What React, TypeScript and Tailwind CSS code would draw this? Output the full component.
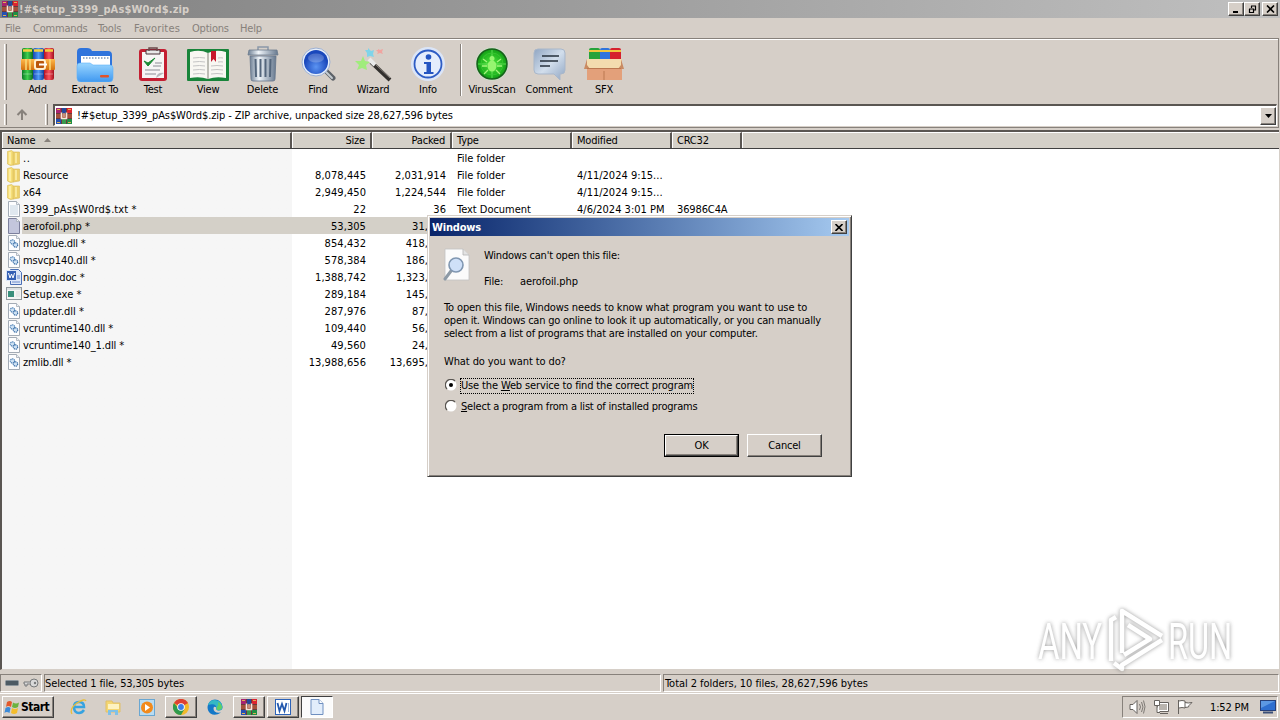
import React from "react";

const UI = "font-['DejaVu_Sans_Condensed','DejaVu_Sans',sans-serif]";
const RAISED =
  "border border-t-white border-l-white border-r-[#404040] border-b-[#404040] shadow-[inset_-1px_-1px_0_#87817b]";
const SUNKEN = "border border-t-[#87817b] border-l-[#87817b] border-r-white border-b-white";

const WinRarIcon = () => (
  <svg width="16" height="16" viewBox="0 0 16 16" className="shrink-0">
    <rect width="16" height="16" fill="#6a3a3c" />
    <rect x="0" y="0" width="5" height="5" fill="#a8246f" />
    <rect x="6" y="0" width="4" height="5" fill="#27479c" />
    <rect x="11" y="0" width="5" height="5" fill="#dc2430" />
    <rect x="0" y="11" width="5" height="5" fill="#2450b4" />
    <rect x="6" y="11" width="4" height="5" fill="#3a9a4e" />
    <rect x="11" y="11" width="5" height="5" fill="#1f8f45" />
    <rect x="0" y="6" width="16" height="4" fill="#a5503a" />
    <path d="M1 1.500h3M12 1.500h3M1 14.500h3M12 14.500h3" stroke="#e0b050" />
    <path d="M5.500 4.500v6h5v-6" stroke="#f3e6dc" strokeWidth="1.600" fill="none" />
    <path d="M8 5v4" stroke="#e9d2bc" />
  </svg>
);

const AddIcon = () => (
  <svg width="36" height="36" viewBox="0 0 36 36">
    <defs>
      <linearGradient id="bg"><stop stopColor="#0b7a25" /><stop offset=".5" stopColor="#3fd04f" /><stop offset="1" stopColor="#0c6b22" /></linearGradient>
      <linearGradient id="bb"><stop stopColor="#1846b0" /><stop offset=".5" stopColor="#4d9bf5" /><stop offset="1" stopColor="#153c9a" /></linearGradient>
      <linearGradient id="br"><stop stopColor="#b81120" /><stop offset=".5" stopColor="#fb5560" /><stop offset="1" stopColor="#a3101d" /></linearGradient>
      <linearGradient id="belt" x2="0" y2="1"><stop stopColor="#ffb84a" /><stop offset="1" stopColor="#d3700c" /></linearGradient>
    </defs>
    <rect x="2" y="2" width="11" height="32" rx="2" fill="url(#bg)" />
    <rect x="13" y="2" width="11" height="32" rx="2" fill="url(#bb)" />
    <rect x="24" y="2" width="10" height="32" rx="2" fill="url(#br)" />
    <path d="M3 4.500h9M14 4.500h9M25 4.500h8" stroke="#f5cf3f" strokeWidth="2.500" />
    <path d="M3 28h9M14 28h9M25 28h8" stroke="#fff" strokeOpacity=".35" />
    <rect x="1" y="13" width="34" height="11" rx="1" fill="url(#belt)" />
    <path d="M6 13v11M10 13v11M30 13v11" stroke="#f9dc7a" strokeWidth="1.500" />
    <rect x="15" y="14" width="10" height="9" rx="2" fill="#b9560b" stroke="#fff0d0" strokeWidth="2" />
    <path d="M19 18.500h8" stroke="#fff" strokeWidth="2" />
  </svg>
);

const ExtractIcon = () => (
  <svg width="38" height="36" viewBox="0 0 38 36">
    <defs>
      <linearGradient id="fo" x2="0" y2="1"><stop stopColor="#9ad6ff" /><stop offset="1" stopColor="#3f98f0" /></linearGradient>
    </defs>
    <path d="M1 6q0-4 4-4h6q4 0 5 3h16q4 0 4 4v18H1z" fill="#2f74dc" />
    <rect x="5" y="10" width="29" height="12" fill="#fff" />
    <path d="M7 12h26" stroke="#9cb0c8" strokeDasharray="1.500 1.500" strokeWidth="2" />
    <path d="M1 20q0-3 3-3h10l3 2h17q3 0 3 3v10q0 4-4 4H5q-4 0-4-4z" fill="url(#fo)" stroke="#5fb1f8" strokeWidth=".6" />
    <rect x="24" y="29" width="9" height="2.500" rx="1" fill="#e2532a" />
  </svg>
);

const TestIcon = () => (
  <svg width="30" height="36" viewBox="0 0 30 36">
    <rect x="1" y="3" width="28" height="32" rx="3" fill="#c41f32" />
    <rect x="4" y="6" width="22" height="26" fill="#f7f5f5" />
    <path d="M8 4h14v4H8z" fill="#e8e8e8" stroke="#4a3238" />
    <path d="M11 5V2h8v3" fill="none" stroke="#6b4a4a" strokeWidth="1.500" />
    <path d="M6 15l4 5 7-8-7 5z" fill="#1c8a35" stroke="#1c8a35" />
    <path d="M17 17h7M15 20h8M7 24h15M7 28h11" stroke="#8d8d95" />
    <path d="M18 32q1-6 8-5l-8 5z" fill="#b8b8be" />
  </svg>
);

const ViewIcon = () => (
  <svg width="42" height="36" viewBox="0 0 42 36">
    <rect x="0" y="3" width="42" height="32" rx="1" fill="#18843a" />
    <path d="M3 6q10-3 18 1 8-4 18-1v26q-10-2-18 1-8-3-18-1z" fill="#f8f7f2" />
    <path d="M21 7v26" stroke="#a9a89f" strokeWidth="1.500" />
    <path d="M6 12q7-1 12 0M6 16q7-1 12 0M6 20q7-1 12 0M6 24q7-1 12 0M6 28q7-1 12 0M24 20q6-1 12 0M24 24q6-1 12 0M24 28q6-1 12 0M31 12q3-.500 5 0M31 16q3-.500 5 0" stroke="#c4c4c4" fill="none" />
    <path d="M24 5h5v11l-2.500-3-2.500 3z" fill="#c8182c" />
  </svg>
);

const DeleteIcon = () => (
  <svg width="32" height="36" viewBox="0 0 32 36">
    <defs>
      <linearGradient id="can"><stop stopColor="#6d7f94" /><stop offset=".35" stopColor="#f0f5fa" /><stop offset="1" stopColor="#66788e" /></linearGradient>
    </defs>
    <path d="M11 4V1h10v3" fill="none" stroke="#8a98a8" strokeWidth="1.500" />
    <path d="M2 4h28l1 5H1z" fill="url(#can)" stroke="#6c7c8e" strokeWidth=".8" />
    <path d="M3 10h26l-1 23q0 2-2 2H6q-2 0-2-2z" fill="url(#can)" stroke="#65758a" strokeWidth=".8" />
    <path d="M8.500 13l.5 18M13.500 13v18M18.500 13v18M23.500 13l-.5 18" stroke="#54667c" strokeWidth="2" />
  </svg>
);

const FindIcon = () => (
  <svg width="36" height="36" viewBox="0 0 36 36">
    <defs>
      <radialGradient id="lens" cy=".7"><stop stopColor="#5c94f2" /><stop offset="1" stopColor="#1a48bc" /></radialGradient>
    </defs>
    <path d="M26 25l7 7" stroke="#5d6268" strokeWidth="5" strokeLinecap="round" />
    <path d="M25 25l7 7" stroke="#c5cbd0" strokeWidth="2" strokeLinecap="round" />
    <circle cx="16" cy="16" r="14" fill="#e6eefa" stroke="#9db0d2" />
    <circle cx="16" cy="16" r="12" fill="url(#lens)" />
    <ellipse cx="16" cy="12" rx="8" ry="4.500" fill="#fff" opacity=".22" />
  </svg>
);

const WizardIcon = () => (
  <svg width="38" height="36" viewBox="0 0 38 36">
    <path d="M17 16L36 34" stroke="#33302e" strokeWidth="4" />
    <path d="M15 13l6 6" stroke="#e9e9e9" strokeWidth="4" />
    <path d="M21 18l15 14" stroke="#8c8580" />
    <path d="M9 10l2 5 5 1-4 3 1 5-5-2-5 2 2-5-4-4 6 0z" fill="#a0ec7c" />
    <path d="M14 2l3 3 3-1-1 4 1 3-4-1-3 1 0-4-2-3 3 0z" fill="#7fd4ea" />
    <path d="M24 3l2 1 3-1-1 3 1 2-3-1-3 1 1-2-2-2 2 0z" fill="#f0a4a0" />
  </svg>
);

const InfoIcon = () => (
  <svg width="36" height="36" viewBox="0 0 36 36">
    <circle cx="18" cy="18" r="17" fill="#dbe5f7" />
    <circle cx="18" cy="18" r="13.500" fill="#e4edfc" stroke="#2d5cc4" strokeWidth="1.800" />
    <circle cx="18.500" cy="11" r="2.800" fill="#2455c2" />
    <path d="M14 16h7v10h2.500v2h-9.500v-2h2.500v-8h-2.500z" fill="#2455c2" />
  </svg>
);

const VirusIcon = () => (
  <svg width="36" height="36" viewBox="0 0 36 36">
    <defs>
      <radialGradient id="vs"><stop stopColor="#4ee83c" /><stop offset="1" stopColor="#12a016" /></radialGradient>
    </defs>
    <circle cx="18" cy="18" r="16.500" fill="#cfe3cc" />
    <circle cx="18" cy="18" r="15" fill="url(#vs)" stroke="#17601b" strokeWidth="1.500" />
    <path d="M18 4v28M4 18h28" stroke="#7ff470" strokeWidth=".7" />
    <circle cx="18" cy="18" r="11" stroke="#35c62f" fill="none" />
    <ellipse cx="18" cy="20" rx="4.500" ry="5.500" fill="#96f570" />
    <circle cx="18" cy="12.500" r="2.500" fill="#96f570" />
    <path d="M13 16l-4-3M13 20H8M14 24l-4 4M23 16l4-3M23 20h5M22 24l4 4" stroke="#a4f57c" strokeWidth="1.300" />
  </svg>
);

const CommentIcon = () => (
  <svg width="36" height="36" viewBox="0 0 36 36">
    <defs>
      <linearGradient id="cm" x2="1" y2="1"><stop stopColor="#8fa5c2" /><stop offset=".5" stopColor="#d2deec" /><stop offset="1" stopColor="#8fa5c2" /></linearGradient>
    </defs>
    <path d="M7 3h23q4 0 4 4v17q0 4-4 4h-1v6l-6-6H7q-4 0-4-4V7q0-4 4-4z" fill="url(#cm)" stroke="#a9b7ca" />
    <path d="M11 10h17M9 15h18M9 20h10" stroke="#26303c" strokeWidth="1.500" />
  </svg>
);

const SfxIcon = () => (
  <svg width="40" height="36" viewBox="0 0 40 36">
    <rect x="5" y="2" width="11" height="14" rx="2" fill="#26a33a" />
    <rect x="16" y="2" width="10" height="14" rx="2" fill="#2f73dc" />
    <rect x="26" y="2" width="11" height="14" rx="2" fill="#d5202d" />
    <path d="M5 5h11M16 5h10M26 5h11" stroke="#efc63e" strokeWidth="2" />
    <path d="M3 13h35v10H3z" fill="#f3dcae" />
    <path d="M3 22h35v12H3z" fill="#e3a07a" />
    <path d="M3 13l-3 10h6l-3-4zM37 13l3 10h-6l3-4z" fill="#c98a62" />
    <path d="M3 22.500h34M20 25v9" stroke="#bb7850" />
  </svg>
);

const tools = [
  { label: "Add", width: "w-[51px]", Icon: AddIcon },
  { label: "Extract To", width: "w-16", Icon: ExtractIcon },
  { label: "Test", width: "w-[52px]", Icon: TestIcon },
  { label: "View", width: "w-[58px]", Icon: ViewIcon },
  { label: "Delete", width: "w-[51px]", Icon: DeleteIcon },
  { label: "Find", width: "w-15", Icon: FindIcon },
  { label: "Wizard", width: "w-[50px]", Icon: WizardIcon },
  { label: "Info", width: "w-15", Icon: InfoIcon },
];

const extraTools = [
  { label: "VirusScan", width: "w-15", Icon: VirusIcon },
  { label: "Comment", width: "w-[54px]", Icon: CommentIcon },
  { label: "SFX", width: "w-14", Icon: SfxIcon },
];

type FileKind = "folder" | "txt" | "blank" | "dll" | "doc" | "exe";

const FileIcon = ({ kind }: { kind: FileKind }) => {
  if (kind === "folder") {
    return (
      <svg width="16" height="16" viewBox="0 0 16 16" className="shrink-0">
        <path d="M1.500 1.500l4-1 2 1.500v13l-3 .5-3-1.500z" fill="#f6de78" stroke="#d9b84e" strokeWidth=".6" />
        <path d="M7 2l6.500 0v12l-6.500 1z" fill="#ecd06a" stroke="#d8b858" strokeWidth=".6" />
        <path d="M4 2v12M10 3v10" stroke="#fff4b8" strokeWidth="1.300" />
      </svg>
    );
  }
  if (kind === "doc") {
    return (
      <svg width="16" height="16" viewBox="0 0 16 16" className="shrink-0">
        <path d="M4.500.5h8l3 3v12h-11z" fill="#dfe8f8" stroke="#4a6fb5" />
        <path d="M10 7h4M10 9h4M6 13h8" stroke="#6d8ccc" />
        <rect x=".5" y="1.500" width="10" height="10" fill="#3560b4" stroke="#dce6f8" />
        <path d="M2.500 4l1.500 5 1.500-4 1.500 4 1.500-5" stroke="#fff" fill="none" />
      </svg>
    );
  }
  if (kind === "exe") {
    return (
      <svg width="16" height="16" viewBox="0 0 16 16" className="shrink-0">
        <rect x=".5" y="1.500" width="15" height="12" fill="#f4f4f4" stroke="#8f979c" />
        <path d="M1 3h14" stroke="#c5ced4" />
        <rect x="2" y="5" width="6" height="6" fill="#3a8f7c" />
        <path d="M10 6h4M10 8h4M10 10h4" stroke="#dcdcdc" />
      </svg>
    );
  }
  return (
    <svg width="16" height="16" viewBox="0 0 16 16" className="shrink-0">
      <path d="M2.500.5h8l3 3v12h-11z" fill={kind === "blank" ? "#c3c6dc" : "#fdfdfe"} stroke={kind === "blank" ? "#7c7f9c" : "#a3abb5"} />
      <path d="M10.500.5v3h3" fill="#eef1f5" stroke="#a3abb5" strokeWidth=".8" />
      {kind === "txt" && <path d="M4 5h8M4 7h8M4 9h8M4 11h8M4 13h8" stroke="#c3d3e0" />}
      {kind === "dll" && (
        <>
          <circle cx="6.500" cy="7" r="2.200" fill="#cfe2f4" stroke="#4b7fb4" strokeDasharray="1.200 .6" strokeWidth="1.200" />
          <circle cx="9.500" cy="10" r="2.200" fill="#cfe2f4" stroke="#3a6ea6" strokeDasharray="1.200 .6" strokeWidth="1.200" />
        </>
      )}
    </svg>
  );
};

type Row = {
  kind: FileKind;
  name: string;
  spacing?: string;
  size?: string;
  packed?: string;
  type?: string;
  modified?: string;
  crc?: string;
  selected?: boolean;
};

const rows: Row[] = [
  { kind: "folder", name: "..", spacing: "tracking-[0.6px]", type: "File folder" },
  { kind: "folder", name: "Resource", spacing: "tracking-[0px]", size: "8,078,445", packed: "2,031,914", type: "File folder", modified: "4/11/2024 9:15..." },
  { kind: "folder", name: "x64", size: "2,949,450", packed: "1,224,544", type: "File folder", modified: "4/11/2024 9:15..." },
  { kind: "txt", name: "3399_pAs$W0rd$.txt *", spacing: "tracking-[0.07px]", size: "22", packed: "36", type: "Text Document", modified: "4/6/2024 3:01 PM", crc: "36986C4A" },
  { kind: "blank", name: "aerofoil.php *", spacing: "tracking-[-0.02px]", size: "53,305", packed: "31,", selected: true },
  { kind: "dll", name: "mozglue.dll *", spacing: "tracking-[-0.22px]", size: "854,432", packed: "418," },
  { kind: "dll", name: "msvcp140.dll *", size: "578,384", packed: "186," },
  { kind: "doc", name: "noggin.doc *", size: "1,388,742", packed: "1,323," },
  { kind: "exe", name: "Setup.exe *", spacing: "tracking-[0.1px]", size: "289,184", packed: "145," },
  { kind: "dll", name: "updater.dll *", spacing: "tracking-[0px]", size: "287,976", packed: "87," },
  { kind: "dll", name: "vcruntime140.dll *", size: "109,440", packed: "56," },
  { kind: "dll", name: "vcruntime140_1.dll *", size: "49,560", packed: "24," },
  { kind: "dll", name: "zmlib.dll *", size: "13,988,656", packed: "13,695," },
];

const Toolbar = () => (
  <div className="flex h-[64px] pl-1">
    <div className="mt-1 h-14 w-[3px] border-l border-r border-l-white border-r-[#87817b]" />
    <div className="flex pl-[5px]">
      {tools.map(({ label, width, Icon }) => (
        <div key={label} className={`${width} flex flex-col items-center pt-1.5`}>
          <Icon />
          <span className="mt-px leading-[13px]">{label}</span>
        </div>
      ))}
    </div>
    <div className="ml-[2px] mt-1 h-[52px] w-[2px] border-l border-r border-l-[#87817b] border-r-white" />
    {extraTools.map(({ label, width, Icon }) => (
      <div key={label} className={`${width} flex flex-col items-center pt-1.5`}>
        <Icon />
        <span className="mt-px leading-[13px]">{label}</span>
      </div>
    ))}
  </div>
);

const AddressBar = () => (
  <div className="flex h-[22px] pl-1">
    <div className="h-[21px] w-[3px] border-l border-r border-l-white border-r-[#87817b]" />
    <div className="flex w-[38px] items-center pl-2">
      <svg width="14" height="12" viewBox="0 0 14 12">
        <path d="M7 11V2M2.500 6L7 1.500 11.500 6" stroke="#87817b" strokeWidth="2" fill="none" />
      </svg>
    </div>
    <div className="h-[21px] w-[3px] border-l border-r border-l-white border-r-[#87817b]" />
    <div className="ml-[5px] flex h-[22px] w-[1224px] items-center border-t-2 border-l-2 border-r border-b border-t-[#5a5652] border-l-[#5a5652] border-r-white border-b-white bg-white pl-px">
      <WinRarIcon />
      <span className="ml-[5px] flex-1 tracking-[-0.09px]">!#$etup_3399_pAs$W0rd$.zip - ZIP archive, unpacked size 28,627,596 bytes</span>
      <div className={`flex h-[18px] w-4 items-center justify-center bg-[#d6cfc8] ${RAISED}`}>
        <svg width="7" height="4" viewBox="0 0 7 4"><path d="M0 0h7L3.500 4z" /></svg>
      </div>
    </div>
  </div>
);

const HeaderCell = ({ className, children }: { className: string; children?: React.ReactNode }) => (
  <div className={`flex h-4 items-center border-t border-l border-t-white border-l-white border-r-2 border-r-[#5a5652] bg-[#d4d0c8] pr-[5px] pl-1 ${className}`}>
    {children}
  </div>
);

const FileList = () => (
  <div className="flex h-[540px] flex-col border-t-2 border-l-2 border-t-[#5a5652] border-l-[#5a5652] border-b border-b-[#d6cfc8] bg-white">
    <div className="flex border-b border-[#404040]">
      <HeaderCell className="w-[290px]">
        Name
        <svg width="7" height="4" viewBox="0 0 7 4" className="mb-[2px] ml-[9px]"><path d="M0 4h7L3.500 0z" fill="#87817b" /></svg>
      </HeaderCell>
      <HeaderCell className="w-20 justify-end">Size</HeaderCell>
      <HeaderCell className="w-20 justify-end">Packed</HeaderCell>
      <HeaderCell className="w-30">Type</HeaderCell>
      <HeaderCell className="w-25">Modified</HeaderCell>
      <HeaderCell className="w-[70px]">CRC32</HeaderCell>
      <div className="h-4 flex-1 border-t border-l border-white bg-[#d4d0c8]" />
    </div>
    <div className="flex flex-1 flex-col bg-linear-to-r from-[#f6f6f6] from-[290px] to-white to-[290px]">
      {rows.map((row) => (
        <div key={row.name} className="flex h-[17px] items-center">
          <div className="flex w-[290px] items-center pl-1">
            <FileIcon kind={row.kind} />
            <span className={`flex h-[17px] flex-1 items-center pt-px pl-px whitespace-pre ${row.spacing ?? "tracking-[-0.12px]"} ${row.selected ? "bg-[#d4d0c8]" : ""}`}>{row.name}</span>
          </div>
          <div className={`flex h-[17px] items-center pt-px tracking-[0.07px] ${row.selected ? "bg-[#d4d0c8]" : ""}`}>
            <span className="w-20 pr-[6px] text-right">{row.size}</span>
            <span className={row.type ? "w-20 pr-[6px] text-right" : "w-[56px] text-right"}>{row.packed}</span>
            <span className="w-30 pl-[5px] tracking-[-0.03px]">{row.type}</span>
            <span className="w-25 pl-[5px] tracking-[0px]">{row.modified}</span>
            <span className="w-[70px] pl-[5px] tracking-[-0.12px]">{row.crc}</span>
          </div>
        </div>
      ))}
    </div>
  </div>
);

const StatusBar = () => (
  <div className="flex h-[22px] gap-[2px] pt-1">
    <div className={`flex h-[18px] w-[42px] items-center gap-1 pl-1 ${SUNKEN}`}>
      <svg width="14" height="6" viewBox="0 0 14 6"><rect x=".5" y=".5" width="13" height="5" rx="1" fill="#4d5a63" stroke="#8d969c" /></svg>
      <svg width="16" height="10" viewBox="0 0 16 10">
        <circle cx="11" cy="5" r="4" fill="#d9d9d9" stroke="#77797a" />
        <circle cx="12" cy="5" r="1.200" fill="#77797a" />
        <path d="M7 4H1v2h1v2h2V6h3" fill="#d9d9d9" stroke="#77797a" />
      </svg>
    </div>
    <div className={`flex h-[18px] w-[617px] items-center tracking-[-0.1px] ${SUNKEN}`}>Selected 1 file, 53,305 bytes</div>
    <div className={`flex h-[18px] w-[616px] items-center pl-px tracking-[-0.05px] ${SUNKEN}`}>Total 2 folders, 10 files, 28,627,596 bytes</div>
  </div>
);

const Taskbar = () => (
  <div className="flex h-[27px] items-start border-t border-white bg-[#d6cfc8] pt-[2px] pl-[2px]">
    <div className={`flex h-[22px] w-[52px] items-center pl-px text-[12px] font-bold tracking-[-0.5px] ${RAISED}`}>
      <svg width="16" height="16" viewBox="0 0 16 16" className="mr-px">
        <path d="M3 3q3-2 5 0L7 8q-3-2-5 0z" fill="#e3592b" />
        <path d="M9 3.500q3 2 6 0L14 8q-3 2-6 0z" fill="#6cb33f" />
        <path d="M1.500 9q3-2 5 0l-1 5q-3-2-5 0z" fill="#3b8ad8" />
        <path d="M8 9q3 2 6 0l-1 5q-3 2-6 0z" fill="#f4bd2c" />
      </svg>
      Start
    </div>
    <div className="ml-[8px] flex h-[22px] items-center">
      <div className="flex w-[34px] justify-center">
        <svg width="18" height="18" viewBox="0 0 18 18">
          <path d="M14 12q-2 3-5 3-5 0-5-6 0-5 5-5 5 0 5 5H5" fill="none" stroke="#37a3e0" strokeWidth="2.500" />
          <path d="M2 16Q-1 11 7 5q8-5 9-2" fill="none" stroke="#e9be3a" strokeWidth="1.300" />
        </svg>
      </div>
      <div className="flex w-[34px] justify-center">
        <svg width="18" height="18" viewBox="0 0 18 18">
          <path d="M2 3h6l1 2h7v9H2z" fill="#f4d671" stroke="#e0bf68" />
          <path d="M4 6h11v5H4z" fill="#fdf2c0" />
          <path d="M4 17v-5h10v5h-3v-3H7v3z" fill="#7fc1e8" />
        </svg>
      </div>
      <div className="flex w-[34px] justify-center">
        <svg width="17" height="17" viewBox="0 0 17 17">
          <rect x=".5" y=".5" width="15" height="16" fill="#b9dcf2" stroke="#6aa7d2" />
          <circle cx="8" cy="8.500" r="6" fill="#f28a1c" />
          <path d="M6 5l5 3.500-5 3.500z" fill="#fff" />
        </svg>
      </div>
      <div className={`ml-px flex h-[22px] w-[32px] items-center justify-center ${RAISED}`}>
        <svg width="16" height="16" viewBox="0 0 16 16">
          <circle cx="8" cy="8" r="8" fill="#f2b92a" />
          <path d="M8 8L1 4a8 8 0 0 1 14 0z" fill="#dd4034" />
          <path d="M1 4a8 8 0 0 0 7 12l3.500-6H6z" fill="#2f9a4d" />
          <circle cx="8" cy="8" r="3.800" fill="#fff" />
          <circle cx="8" cy="8" r="2.900" fill="#3c7de8" />
        </svg>
      </div>
      <div className="flex w-[36px] justify-center">
        <svg width="16" height="16" viewBox="0 0 16 16">
          <path d="M.5 8a7.500 7.500 0 0 1 15 0q0 3.500-4 3.500-3 0-2-3-3-2-3 1 0 5 7.500 4-6 4-10.500 1Q.5 12 .5 8z" fill="#1478c8" />
          <path d="M1 6a7.500 7.500 0 0 1 14.500 2q0 3.500-4 3.500-3 0-2-3-1-5-8.500-2.500z" fill="#35b8c4" />
          <path d="M11 3q4 2 4 6-1 2-4 2-2 0-1-3 2-2 1-5z" fill="#62cf62" />
        </svg>
      </div>
      <div className={`flex h-[22px] w-[32px] items-center justify-center ${RAISED}`}><WinRarIcon /></div>
      <div className={`ml-[2px] flex h-[22px] w-[32px] items-center justify-center ${RAISED}`}>
        <svg width="16" height="16" viewBox="0 0 16 16">
          <rect x=".5" y=".5" width="15" height="15" fill="#fff" stroke="#2c62b8" />
          <path d="M13.500 4v9" stroke="#9bb8e2" />
          <path d="M2.500 4l2 8 2.500-7 2.500 7 2-8" fill="none" stroke="#2358ae" strokeWidth="1.800" />
        </svg>
      </div>
      <div className="ml-[2px] flex h-[22px] w-[32px] items-center justify-center border border-t-[#404040] border-l-[#404040] border-r-white border-b-white bg-[#fbfbfb]">
        <svg width="14" height="16" viewBox="0 0 14 16">
          <path d="M1 .5h8l4 4v11H1z" fill="#e2edfb" stroke="#6f8fc0" />
          <path d="M9 .5v4h4" fill="#fff" stroke="#6f8fc0" />
        </svg>
      </div>
    </div>
    <div className={`mr-[2px] ml-auto flex h-[22px] w-[156px] items-center pl-[6px] ${SUNKEN}`}>
      <svg width="64" height="18" viewBox="0 0 64 18" fill="#fff" stroke="#66625e">
        <path d="M1 6.500h3l4-4v13l-4-4H1z" />
        <path d="M10.500 6q2 3 0 6M12.500 4q3 5 0 10M14.500 2.500q3 6 0 13" fill="none" strokeWidth=".8" />
        <path d="M28.500 4.500h11v9h-11zM31 15.500h8" />
        <rect x="30" y="6" width="8" height="6" fill="#b9b4ae" stroke="none" />
        <path d="M25.500 2.500h5v5h-5zM28 8v6.500h3" />
        <path d="M49.500 2v14M50 3q3-1 6 0v7q-3-1-6 0M56 4.500q3 1 7 0l-3 3q1 2-4 2" />
      </svg>
      <span className="ml-[17px] tracking-[-0.15px]">1:52 PM</span>
      <svg width="16" height="14" viewBox="0 0 16 14" className="mr-px ml-auto">
        <rect x=".5" y=".5" width="15" height="10" fill="#2f6fd0" stroke="#27407a" />
        <path d="M1 1h14L1 8z" fill="#5c98e4" />
        <path d="M3 12.500h10" stroke="#3b4f78" strokeWidth="2" />
      </svg>
    </div>
  </div>
);

const Radio = ({ checked }: { checked?: boolean }) => (
  <svg width="12" height="12" viewBox="0 0 12 12" className="mb-[2px] shrink-0">
    <circle cx="6" cy="6" r="5.500" fill="#fff" />
    <path d="M2 10A5.500 5.500 0 0 1 10 2" fill="none" stroke="#5a5652" strokeWidth="1.300" />
    {checked && <circle cx="6" cy="6" r="2" />}
  </svg>
);

const Dialog = () => (
  <div className="absolute top-[215px] left-[427px] h-[262px] w-[425px] border border-t-[#d6cfc8] border-l-[#d6cfc8] border-r-[#404040] border-b-[#404040] bg-[#d6cfc8] shadow-[inset_1px_1px_0_#fff,inset_-1px_-1px_0_#87817b]">
    <div className="mx-[2px] mt-[2px] flex h-[18px] items-center bg-linear-to-r from-[#0a246a] to-[#a6caf0] pl-[2px] text-white">
      <span className="flex-1 font-bold">Windows</span>
      <div className={`mr-[2px] flex h-[14px] w-4 items-center justify-center bg-[#d6cfc8] ${RAISED}`}>
        <svg width="8" height="7" viewBox="0 0 8 7"><path d="M.5 0l7 7M7.500 0l-7 7" stroke="#000" strokeWidth="1.600" /></svg>
      </div>
    </div>
    <div className="flex pt-3 pl-[14px]">
      <svg width="28" height="33" viewBox="0 0 28 33">
        <path d="M3 1h18l6 6v25H3z" fill="#fbfbfb" stroke="#c3c3c3" strokeWidth=".8" />
        <path d="M21 1v6h6" fill="#e3e3e3" stroke="#b4b4b4" strokeWidth=".8" />
        <path d="M9 23l-6 8" stroke="#8d9aa6" strokeWidth="3" strokeLinecap="round" />
        <circle cx="14" cy="17" r="7" fill="#cfe0f8" stroke="#7f96b0" strokeWidth="1.600" />
      </svg>
      <div className="ml-[14px] pt-px leading-[13px]">
        <p className="tracking-[-0.22px]">Windows can't open this file:</p>
        <p className="mt-[13px] flex tracking-[-0.1px]"><span className="w-9">File:</span>aerofoil.php</p>
      </div>
    </div>
    <div className="mt-[13px] pl-4 leading-[13px] whitespace-nowrap">
      <p className="tracking-[-0.12px]">To open this file, Windows needs to know what program you want to use to</p>
      <p className="tracking-[-0.23px]">open it. Windows can go online to look it up automatically, or you can manually</p>
      <p className="tracking-[-0.2px]">select from a list of programs that are installed on your computer.</p>
      <p className="mt-[15px] tracking-[-0.1px]">What do you want to do?</p>
    </div>
    <div className="mt-[10px] flex flex-col gap-[5px] pl-[17px] leading-[14px]">
      <div className="flex items-center gap-1">
        <Radio checked />
        <span className="-ml-px border border-dotted border-black tracking-[-0.14px]">Use the <u>W</u>eb service to find the correct program</span>
      </div>
      <div className="flex items-center gap-1">
        <Radio />
        <span className="-ml-px border border-transparent"><u>S</u>elect a program from a list of installed programs</span>
      </div>
    </div>
    <div className="mt-[19px] flex justify-end gap-2 pr-[29px]">
      <div className="h-[23px] w-[75px] border border-black">
        <div className={`flex h-[21px] items-center justify-center ${RAISED}`}>OK</div>
      </div>
      <div className={`flex h-[23px] w-[75px] items-center justify-center ${RAISED}`}>Cancel</div>
    </div>
  </div>
);

const Watermark = () => (
  <svg width="214" height="74" viewBox="0 0 214 74" className="absolute top-[603px] left-[1034px] overflow-visible font-['Roboto',sans-serif] opacity-75 drop-shadow-[0_0_2px_#777]">
    <g fill="#fff" fontSize="50">
      <text x="4" y="56" textLength="64" lengthAdjust="spacingAndGlyphs">ANY</text>
      <text x="134" y="56" textLength="64" lengthAdjust="spacingAndGlyphs">RUN</text>
    </g>
    <path d="M77 58V17L82 14M88 50V8L128 33M128 37L88 62V66L80 60M94 22L116 36 90 52" fill="none" stroke="#fff" strokeWidth="4.500" strokeLinejoin="round" />
  </svg>
);

const TitleButton = ({ className = "", children }: { className?: string; children: React.ReactNode }) => (
  <div className={`flex h-[14px] w-4 items-center justify-center bg-[#d6cfc8] ${RAISED} ${className}`}>
    <svg width="9" height="8" viewBox="0 0 9 8" fill="none" stroke="#000">{children}</svg>
  </div>
);

const menu = [
  { label: "File", width: "w-7" },
  { label: "Commands", width: "w-[65px]" },
  { label: "Tools", width: "w-9" },
  { label: "Favorites", width: "w-[58px] tracking-[0.15px]" },
  { label: "Options", width: "w-12" },
  { label: "Help", width: "w-8" },
];

const App = () => {
  return (
    <div className={`relative h-[720px] w-[1280px] overflow-hidden bg-[#d6cfc8] text-[11px] leading-none tracking-[-0.2px] text-black ${UI}`}>
      <div className="flex h-[18px] items-center bg-linear-to-r from-[#808080] to-[#c0c0c0] pr-[2px] pl-[2px]">
        <WinRarIcon />
        <span className="ml-px flex-1 font-bold tracking-[0.13px] text-[#d6cfc8]">!#$etup_3399_pAs$W0rd$.zip</span>
        <TitleButton><path d="M1 7h5" strokeWidth="2" /></TitleButton>
        <TitleButton><path d="M3 1h5M3.500 1v2M7.500 1v4H6M1 4h5M1.500 4v3.500h4V4" strokeWidth="1.200" /></TitleButton>
        <TitleButton className="ml-[2px]"><path d="M1 0.500l7 7M8 .5l-7 7" strokeWidth="1.600" /></TitleButton>
      </div>
      <div className="flex h-5 items-center pl-[5px] text-[#87817b]">
        {menu.map((item) => (
          <span key={item.label} className={item.width}>{item.label}</span>
        ))}
      </div>
      <div className="h-[90px] w-[1279px] border-t border-r border-b border-[#87817b] pt-px shadow-[inset_0_1px_0_#fff]">
        <Toolbar />
        <AddressBar />
      </div>
      <div className="mt-[2px] w-[1279px]">
        <FileList />
      </div>
      <StatusBar />
      <div className="h-px" />
      <Taskbar />
      <Watermark />
      <Dialog />
    </div>
  );
};

export default App;
